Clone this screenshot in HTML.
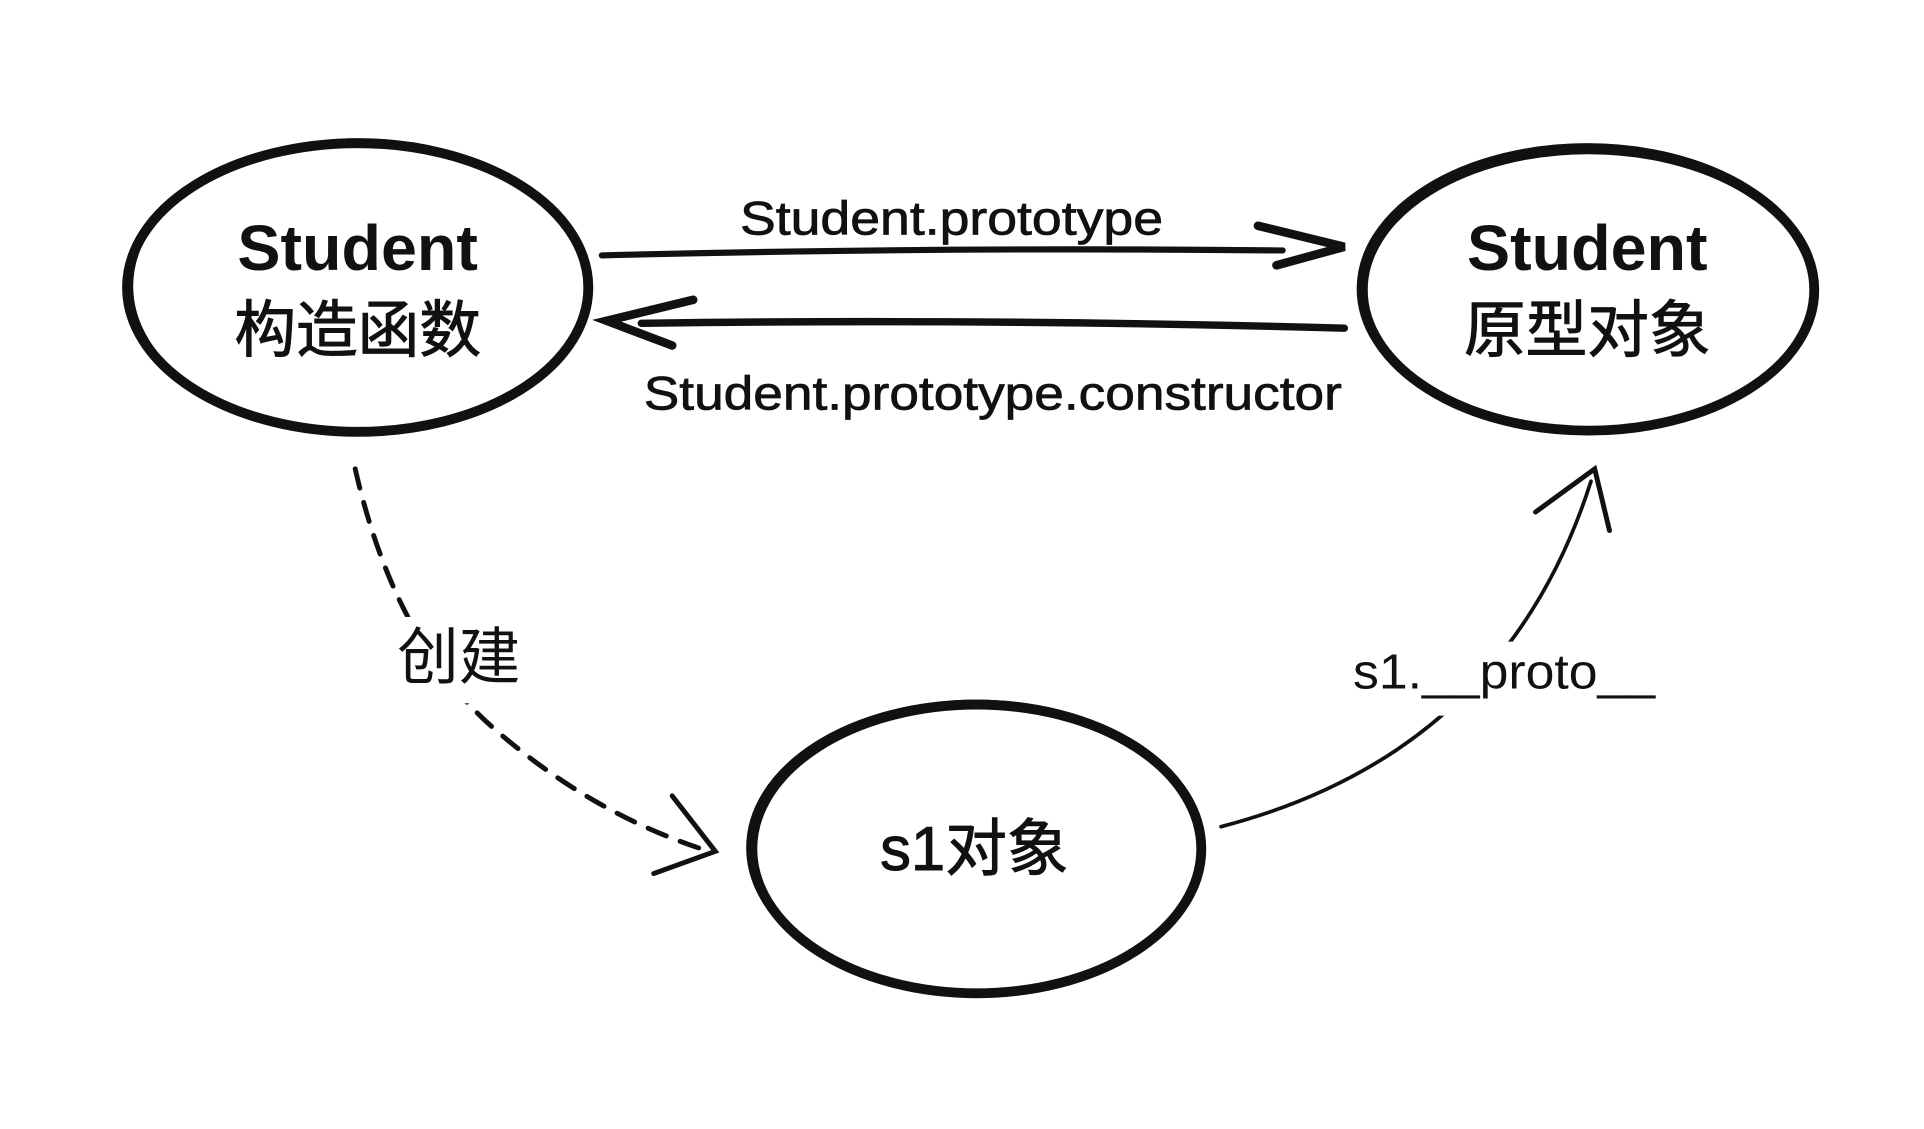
<!DOCTYPE html>
<html><head><meta charset="utf-8"><style>
html,body{margin:0;padding:0;background:#fff;}
svg{display:block}
text{font-family:"Liberation Sans","Noto Sans CJK SC",sans-serif;fill:#111;}
</style></head><body>
<svg width="1924" height="1129" viewBox="0 0 1560 915" preserveAspectRatio="none">
<g fill="none" stroke="#111" stroke-linecap="round">
<ellipse cx="290" cy="233" rx="187" ry="117" stroke-width="8"/>
<ellipse cx="291" cy="232" rx="184" ry="119" stroke-width="2"/>
<ellipse cx="1288" cy="235" rx="183" ry="114" stroke-width="8"/>
<ellipse cx="1287" cy="234" rx="186" ry="117" stroke-width="2"/>
<ellipse cx="792" cy="688" rx="182" ry="117" stroke-width="8"/>
<ellipse cx="791" cy="687" rx="185" ry="119" stroke-width="2"/>
<path d="M488,207 Q760,200 1040,203" stroke-width="5"/>
<path d="M1020,183 L1090,200 L1035,215" stroke-width="7"/>
<path d="M1090,266 Q800,258 520,262" stroke-width="6"/>
<path d="M562,243 L492,260 L545,280" stroke-width="7"/>
<path d="M288,380 Q320,520 400,590 Q480,660 575,690" stroke-width="4" stroke-dasharray="16 12"/>
<path d="M545,645 L580,690 L530,708" stroke-width="4"/>
<path d="M990,670 Q1220,610 1290,390" stroke-width="3"/>
<path d="M1245,415 L1293,380 L1305,430" stroke-width="4"/>
</g>
<rect x="300" y="500" width="140" height="70" fill="#fff"/>
<rect x="1090" y="520" width="260" height="60" fill="#fff"/>
<text x="290" y="219" font-size="52" font-weight="bold" text-anchor="middle" textLength="195" lengthAdjust="spacingAndGlyphs">Student</text>
<text x="290" y="285" font-size="50" text-anchor="middle" stroke="#111" stroke-width="0.8">构造函数</text>
<text x="1287" y="219" font-size="52" font-weight="bold" text-anchor="middle" textLength="195" lengthAdjust="spacingAndGlyphs">Student</text>
<text x="1287" y="285" font-size="50" text-anchor="middle" stroke="#111" stroke-width="0.8">原型对象</text>
<text x="600" y="190" font-size="38" stroke="#111" stroke-width="0.6" textLength="343" lengthAdjust="spacingAndGlyphs">Student.prototype</text>
<text x="522" y="332" font-size="38" stroke="#111" stroke-width="0.6" textLength="566" lengthAdjust="spacingAndGlyphs">Student.prototype.constructor</text>
<text x="322" y="550" font-size="50">创建</text>
<text x="1097" y="558" font-size="40" textLength="245" lengthAdjust="spacingAndGlyphs">s1.__proto__</text>
<text x="790" y="705" font-size="50" text-anchor="middle" stroke="#111" stroke-width="0.8">s1对象</text>
</svg>
</body></html>
